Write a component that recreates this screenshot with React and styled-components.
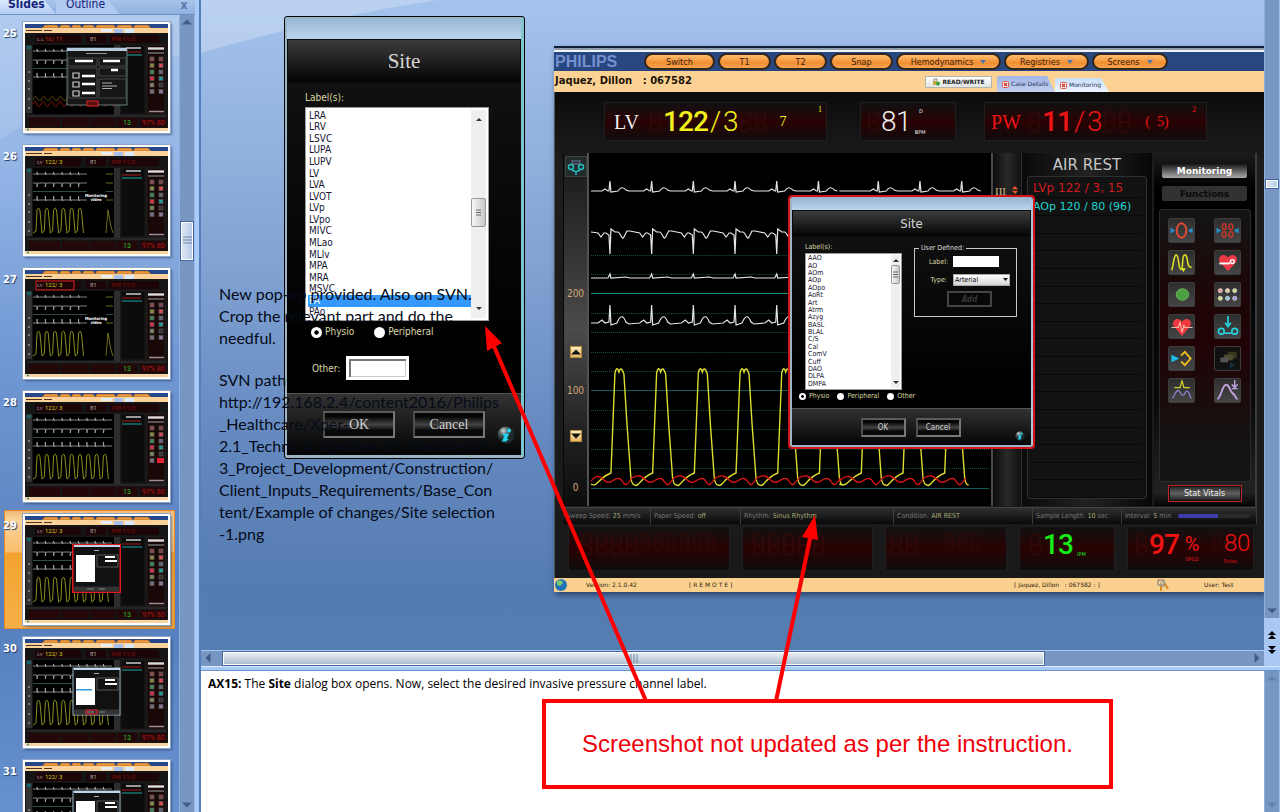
import React from "react";
import styled, { createGlobalStyle, css } from "styled-components";

const UI = `"DejaVu Sans Condensed", "DejaVu Sans", sans-serif`;
const WIDE = `"DejaVu Sans", sans-serif`;
const SERIF = `"Liberation Serif", serif`;
const LED = `Roboto, sans-serif`;

const Global = createGlobalStyle`
  * { box-sizing: border-box; }
  body { margin: 0; overflow: hidden; font-family: ${UI}; }
  button, input, select { font-family: inherit; margin: 0; padding: 0; }
  button { cursor: pointer; }
  ul, ol { list-style: none; margin: 0; padding: 0; }
  h1, h2, p, dl, dd { margin: 0; font-weight: normal; }
`;

/* ---------- application shell ---------- */

const Shell = styled.div`
  position: relative;
  display: flex;
  height: 100vh;
  overflow: hidden;
  background: #5a80b8;
`;

const SlidePane = styled.aside`
  flex: none;
  width: 195px;
  display: flex;
  flex-direction: column;
  position: relative;
  background: linear-gradient(#a9c6ee 0, #94b5e6 20%, #6f97d2 45%, #567fbe 75%, #6690cf 100%);
`;

const PaneTabs = styled.div`
  position: relative;
  display: flex;
  flex: none;
  height: 15px;
  background: linear-gradient(#a9c4ea, #8fb0df);
  border-bottom: 1px solid #6d8fc4;
`;

const PaneTab = styled.button`
  border: 0;
  width: ${(p) => (p.$active ? 56 : 64)}px;
  height: 14px;
  text-align: left;
  padding-left: ${(p) => (p.$active ? 8 : 10)}px;
  padding-bottom: 5px;
  line-height: 9px;
  font-size: 12px;
  font-weight: ${(p) => (p.$active ? "bold" : "normal")};
  color: #15237c;
  background: ${(p) => (p.$active ? "linear-gradient(#dbe9fc,#b4cdf1)" : "#b1c9ee")};
  clip-path: polygon(0 0, calc(100% - 12px) 0, 100% 100%, 0 100%);
`;

const CloseButton = styled.button`
  border: 0;
  background: none;
  margin-left: auto;
  width: 22px;
  height: 14px;
  line-height: 8px;
  padding-bottom: 5px;
  font-size: 12px;
  font-weight: bold;
  color: #5876a8;
`;

const PaneBody = styled.div`
  position: relative;
  display: flex;
  flex: 1;
  min-height: 0;
`;

const ThumbList = styled.ol`
  position: relative;
  flex: 1;
  min-width: 0;
  overflow: hidden;
  padding: 3px 4px 0 4px;
`;

const ThumbRow = styled.li`
  display: flex;
  height: 123px;
  padding: 0 0 4px;
`;

const ThumbButton = styled.button`
  display: flex;
  align-items: flex-start;
  width: 100%;
  height: 119px;
  border: 1px solid ${(p) => (p.$active ? "#e88a2a" : "transparent")};
  background: ${(p) =>
    p.$active ? "linear-gradient(#f0b878 0, #f9d59c 8%, #f8bd6c 35%, #f3a22f 36%, #f6b047 100%)" : "transparent"};
  padding: 3px 0 0;
`;

const ThumbNumber = styled.span`
  width: 20px;
  margin-top: 5px;
  margin-left: -2px;
  text-align: left;
  font: bold 11px ${UI};
  color: #fff;
  text-shadow: 1px 1px 1px #23406e;
`;

const ThumbFrame = styled.span`
  display: block;
  width: 147px;
  height: 111px;
  border: 2px solid #fff;
  outline: 1px solid #8fa6c6;
  box-shadow: 2px 2px 2px rgba(20, 40, 80, 0.5);
  svg { display: block; }
`;

const Divider = styled.div`
  flex: none;
  width: 6px;
  background: #a8cbf8;
  border-right: 2px solid #557fbb;
`;

const ScrollTrack = styled.div`
  flex: none;
  display: flex;
  flex-direction: ${(p) => (p.$row ? "row" : "column")};
  ${(p) => (p.$row ? "height: 16px;" : "width: 16px;")}
  background: #7896c2;
  ${(p) => (p.$row ? "border-top: 1px solid #abc8f2;" : "border-left: 1px solid #8fb0dd; border-right: 1px solid #9bbbe8;")}
`;

const ScrollArrow = styled.button`
  border: 0;
  background: none;
  flex: none;
  width: 14px;
  height: 14px;
  display: grid;
  place-items: center;
`;

const ScrollGap = styled.span`
  flex: ${(p) => p.$grow};
`;

const ScrollThumb = styled.span`
  flex: ${(p) => p.$grow};
  display: grid;
  place-items: center;
  border: 1px solid #46679e;
  box-shadow: inset 0 0 0 1px #fff;
  background: ${(p) => (p.$row ? "linear-gradient(#eef3f8, #a9b9cb)" : "linear-gradient(90deg, #dfe9f6, #b4c9e6)")};
`;

const Arrow = ({ dir, fill = "#3f5c8d" }) => {
  const turn = { up: 0, right: 90, down: 180, left: 270 }[dir];
  return (
    <svg width="10" height="10" viewBox="0 0 10 10" aria-hidden="true">
      <path d="M0 7.5 5 2.5 10 7.5Z" fill={fill} transform={`rotate(${turn} 5 5)`} />
    </svg>
  );
};

const Grip = ({ row }) => (
  <svg width="9" height="9" aria-hidden="true">
    <path d="M0 1H9M0 4H9M0 7H9" stroke="#7385a2" transform={row ? "rotate(90 4.5 4.5)" : undefined} />
  </svg>
);

/* ---------- slide thumbnails ---------- */

const cycle = (n, start, step, fn) => Array.from({ length: n }, (_, i) => fn(start + i * step)).join(" ");

function ThumbArt({ kind }) {
  const low = kind === "setup";
  const wide = kind !== "mask" && kind !== "maskbox";
  const beats = (y, h) => "M8 " + y + cycle(wide ? 9 : 6, 12, 8.3, (x) => `H${x} v${-h} l.6 ${h + 1} l.4 -1`) + `H${wide ? 87 : 62}`;
  return (
    <svg width="143" height="107" viewBox="0 0 143 107" aria-hidden="true">
      <rect width="143" height="107" fill="#151515" />
      <rect width="143" height="4" fill="#26488b" />
      <path d="M17 4 20 1H32L34 4 36 1H44L46 4 48 1H55L57 4 59 1H68L70 4 72 1H89L91 4 93 1H106L108 4 110 1H123L126 4Z" fill="#ef993e" stroke="#8b5a2b" strokeWidth=".5" />
      <rect y="4" width="143" height="5" fill="#fbd39a" />
      <path d="M1 6.5H17M19 6.5H27" stroke="#4a3420" strokeWidth="1.2" />
      <rect x="76" y="5" width="11" height="3" fill="#e8edf3" />
      <rect x="89" y="5" width="9" height="4" fill="#a9c0ee" />
      <rect x="100" y="5" width="9" height="4" fill="#dbe9fb" />
      <rect x="10" y="11" width="46" height="8" fill="#1c0506" />
      <rect x="61" y="11" width="20" height="8" fill="#1c0506" />
      <rect x="84" y="11" width="50" height="8" fill="#1c0506" />
      <text x="12" y="17" fontSize="5" fontFamily="Liberation Serif" fill="#aaa">{low ? "LA" : "LV"}</text>
      <text x="20" y="17" fontSize="6" fontFamily="Roboto" fill={low ? "#bd3517" : "#d4cc20"}>{low ? "16/ 11" : "122/ 3"}</text>
      <text x="65" y="17" fontSize="6" fontFamily="Roboto" fill="#aaa">81</text>
      <text x="87" y="17" fontSize="6" fontFamily="Roboto" fill="#8a1010">PW  11/3</text>
      <rect x="1" y="21" width="6" height="68" fill="#333" />
      <rect x="2" y="22" width="4" height="3" fill="#15646b" />
      <path d="M3 48h2M3 57h2M3 65h2M3 75h2M3 84h2" stroke="#cdbb9a" />
      <rect x="8" y="21" width="81" height="69" fill="#000" />
      <path d={beats(27, 2)} stroke="#bbb" strokeWidth=".7" fill="none" />
      <path d={beats(36, -4)} stroke="#bbb" strokeWidth=".7" fill="none" />
      <path d="M8 44.5H88" stroke="#4a6d6a" strokeWidth=".7" />
      <path d={beats(53, 4)} stroke="#bbb" strokeWidth=".7" fill="none" />
      {low ? (
        <>
          <path d={"M8 76" + cycle(10, 8, 8.3, (x) => `Q${x + 2} 70 ${x + 4} 74T${x + 8.3} 76`)} stroke="#7d5315" strokeWidth=".8" fill="none" />
          <path d={"M8 80" + cycle(10, 8, 8.3, (x) => `Q${x + 2} 75 ${x + 4} 80T${x + 8.3} 80`)} stroke="#a31414" strokeWidth=".8" fill="none" />
        </>
      ) : (
        <path d={"M8 86" + cycle(wide ? 9 : 6, 8, 8.3, (x) => `L${x + 3} 84L${x + 4} 63Q${x + 6} 59 ${x + 7} 64L${x + 9} 86`)} stroke="#9c9c20" strokeWidth=".9" fill="none" />
      )}
      <rect x="89" y="21" width="6" height="70" fill="#2d2d2d" />
      <rect x="96" y="21" width="24" height="69" fill="#0c0c0c" stroke="#292929" strokeWidth=".5" />
      <path d="M101 24H116" stroke="#9a9a9a" strokeWidth="2" />
      <path d="M97 28H116" stroke="#8c1919" strokeWidth="1.2" />
      <path d="M97 31H117" stroke="#1b8e8b" strokeWidth="1.2" />
      <rect x="122" y="21" width="18" height="69" fill="#1a0808" stroke="#333" strokeWidth=".5" />
      <path d="M123 24.5H139" stroke="#ddd" strokeWidth="2.4" />
      <path d="M123 29H139" stroke="#555" strokeWidth="2" />
      {["#8d4d4d", "#7e4449", "#888c3a", "#dd4a55", "#3c8a55", "#667", "#dd3040", "#249a98", "#7b8a57", "#333", "#75707d", "#8c7a99"].map((c, i) => (
        <rect key={i} x={125 + (i % 2) * 9} y={33 + Math.floor(i / 2) * 6.5} width="4" height="4" fill={c} stroke="#555" strokeWidth=".7" />
      ))}
      <path d="M124 87.5H139" stroke="#9b8f95" strokeWidth="1.5" />
      <path d="M2 92H141" stroke="#383838" />
      {[4, 37, 66, 92, 115].map((x, i) => (
        <rect key={x} x={x} y="94" width={[31, 27, 24, 20, 26][i]} height="9" fill="#240708" />
      ))}
      <text x="98" y="101" fontSize="7" fontFamily="Roboto" fill="#25c52b">13</text>
      <text x="117" y="101" fontSize="7" fontFamily="Roboto" fill="#b21616">97% 80</text>
      <rect y="104" width="143" height="3" fill="#f7d3a1" />
      <circle cx="3" cy="105.5" r="1" fill="#348b8a" />
      {!wide && <rect x="62" y="22" width="19" height="66" fill="#000" />}
      {!wide && <path d={"M81 86L83 63L86 80L88 86M81 27H88M81 36H88M81 53H88"} stroke="#9c9c20" strokeWidth=".7" fill="none" />}
      {!wide && (
        <text x="71" y="50" fontSize="4" fontWeight="bold" textAnchor="middle" fontFamily="DejaVu Sans Condensed" fill="#fff">
          <tspan x="71">Monitoring</tspan>
          <tspan x="71" dy="4">video</tspan>
        </text>
      )}
      {kind === "maskbox" && <rect x="11" y="11" width="38" height="9" fill="none" stroke="#e21b1b" />}
      {kind === "plain" && <rect x="132" y="65" width="7" height="5" fill="#eb2034" />}
      {low && (
        <>
          <rect x="42" y="24" width="60" height="57" fill="#161616" stroke="#8aa" strokeWidth=".7" />
          <rect x="42" y="24" width="60" height="3" fill="#b6cbe0" />
          <path d="M61 29.5H82" stroke="#999" />
          <path d="M43 34H72V42H43ZM74 34H101V42H74ZM74 44H101V52H74ZM74 55H101V74H74ZM43 44H72V74H43Z" fill="none" stroke="#666" strokeWidth=".6" />
          <path d="M50 37H68M78 37H95M86 46H93M57 52H70M57 60H70M57 69H70" stroke="#fff" strokeWidth="2.4" />
          <path d="M48 49h6v5h-6zM48 58h6v5h-6zM48 67h6v5h-6z" fill="none" stroke="#ccc" strokeWidth="1.2" />
          <path d="M77 59H87M77 62H92M77 64.5H87" stroke="#aaa" />
          <rect x="62" y="77" width="11" height="5" fill="#511" stroke="#e31f28" />
        </>
      )}
      {(kind === "red" || kind === "dialog") && (
        <>
          <rect x="48" y="29" width="47" height="47" fill="#111" stroke={kind === "red" ? "#e1151c" : "#9fb7c8"} />
          <rect x="49" y="29" width="46" height="2" fill="#c0d5eb" />
          <path d="M69 34.5H74" stroke="#aaa" />
          <rect x="51" y="39" width="19" height="27" fill="#fff" />
          {kind === "dialog" && <rect x="51" y="50" width="16" height="1.5" fill="#2c9adc" />}
          <rect x="72" y="39" width="21" height="12" fill="none" stroke="#888" strokeWidth=".6" />
          <path d="M80 41H90M80 45H92" stroke="#fff" strokeWidth="2" />
          <path d="M49 73H94" stroke="#333" strokeWidth="5" />
          <path d="M62 73H69M74 73H80" stroke="#888" />
          {kind === "dialog" && <rect x="61" y="71" width="11" height="4" fill="none" stroke="#eb2030" />}
          {kind === "red" && <rect x="47.5" y="28.5" width="48" height="48" fill="none" stroke="#e1151c" />}
        </>
      )}
    </svg>
  );
}

const slides = [
  [25, "setup"], [26, "mask"], [27, "maskbox"], [28, "plain"], [29, "red"], [30, "dialog"], [31, "dialog"],
];

/* ---------- slide editor ---------- */

const Editor = styled.main`
  flex: 1;
  min-width: 0;
  display: flex;
  flex-direction: column;
`;

const Stage = styled.section`
  flex: 1;
  min-height: 0;
  display: flex;
`;

const StageColumn = styled.div`
  flex: 1;
  min-width: 0;
  display: flex;
  flex-direction: column;
`;

const Canvas = styled.div`
  position: relative;
  flex: 1;
  overflow: hidden;
  background: linear-gradient(#a3c2ec 0, #98b7e3 15%, #82a3d3 40%, #6489c0 68%, #557cb1 90%, #567db2 100%);
`;

const Sheen = styled.svg`
  position: absolute;
  left: 0;
  top: 0;
  z-index: 0;
`;

const PlacedObject = styled.div`
  position: absolute;
  left: ${(p) => p.$left}px;
  top: ${(p) => p.$top}px;
  ${(p) => (p.$fill ? "right: 0;" : "")}
  ${(p) => (p.$width ? `width: ${p.$width}px;` : "")}
  ${(p) => (p.$height ? `height: ${p.$height}px;` : "")}
`;

const SlideNote = styled.div`
  display: grid;
  gap: 20px;
  white-space: pre;
  font-family: Lato, sans-serif;
  font-size: 16px;
  line-height: 22px;
  color: #050b18;
`;

const PageJump = styled.div`
  flex: none;
  height: 48px;
  background: #a9c8f5;
  display: grid;
  place-content: center;
  gap: 3px;
  margin: 0 -1px;
`;

const JumpButton = styled.button`
  border: 0;
  background: none;
  display: block;
  height: 12px;
  line-height: 0;
`;

const Splitter = styled.div`
  flex: none;
  height: 5px;
  background: #a9cbf8;
  border-top: 1px solid #d8e7fb;
  border-bottom: 1px solid #6c93c8;
`;

const NotesRow = styled.section`
  flex: none;
  height: 141px;
  display: flex;
  background: #fff;
`;

const NotesText = styled.p`
  flex: 1;
  padding: 4px 7px;
  font: 12px/18px "Open Sans", ${UI};
  color: #000;
`;

/* ---------- popup dialog shared parts ---------- */

const Dialog = styled.section`
  display: flex;
  flex-direction: column;
  background: linear-gradient(#141414, #000 75%);
  border: ${(p) => (p.$small ? "2px" : "3px")} solid #9db4c4;
  border-top-width: 1px;
  border-left-width: 2px;
  border-right-color: ${(p) => (p.$small ? "#a9c4d8" : "#7fc4cf")};
  outline: ${(p) => (p.$small ? "2px solid #d3151b" : "1px solid #050505")};
  border-radius: 2px;
  height: 100%;
  font-family: ${UI};
  color: #dcd8a8;
`;

const TitleBar = styled.div`
  flex: none;
  height: ${(p) => (p.$small ? 12 : 21)}px;
  background: linear-gradient(#96b6d4, #bcd5ee);
`;

const DialogHeading = styled.h2`
  flex: none;
  display: grid;
  place-items: center;
  height: ${(p) => (p.$small ? 27 : 44)}px;
  border: 1px solid #0a0a0a;
  background: linear-gradient(#3c3c3c, #040404);
  color: #d6d6d6;
  font: ${(p) => (p.$small ? `13px ${UI}` : `21px ${SERIF}`)};
`;

const DialogContent = styled.div`
  flex: 1;
  min-height: 0;
  padding: ${(p) => (p.$small ? "6px 14px 0 13px" : "8px 32px 0 18px")};
`;

const DialogColumns = styled.div`
  display: grid;
  grid-template-columns: 97px 103px;
  justify-content: space-between;
  align-items: start;
`;

const FieldTitle = styled.p`
  font-size: ${(p) => (p.$small ? 7 : 10)}px;
  line-height: ${(p) => (p.$small ? 9 : 14)}px;
`;

const ListFrame = styled.div`
  display: flex;
  height: ${(p) => (p.$small ? 137 : 214)}px;
  margin-top: ${(p) => (p.$small ? 1 : 2)}px;
  padding: ${(p) => (p.$small ? 1 : 2)}px;
  background: #fff;
  border: 1px solid #9b9b9b;
`;

const ListItems = styled.ul`
  flex: 1;
  display: flex;
  flex-direction: column;
  min-height: 0;
`;

const ListItem = styled.li`
  flex: 1;
  display: flex;
  align-items: center;
  min-height: 0;
  padding-left: 1px;
  font-size: ${(p) => (p.$small ? 7 : 10)}px;
  line-height: 1;
  color: ${(p) => (p.$selected ? "#fff" : "#161630")};
  background: ${(p) => (p.$selected ? "#3399ff" : "transparent")};
`;

const ListScroll = styled.div`
  flex: none;
  width: ${(p) => (p.$small ? 9 : 15)}px;
  display: flex;
  flex-direction: column;
  align-items: center;
  padding: ${(p) => (p.$small ? "2px 0" : "6px 0")};
  background: #efefef;
  svg { flex: none; }
`;

const ListThumb = styled.span`
  flex: none;
  width: 100%;
  height: ${(p) => (p.$small ? 19 : 29)}px;
  margin-top: ${(p) => (p.$small ? 2 : 76)}px;
  margin-bottom: auto;
  display: grid;
  place-items: center;
  border: 1px solid #999;
  border-radius: 2px;
  background: linear-gradient(90deg, #f8f8f8, #c7c7c7);
`;

const RadioRow = styled.div`
  display: flex;
  gap: ${(p) => (p.$small ? 8 : 20)}px;
  margin: ${(p) => (p.$small ? "2px 0 0 -6px" : "4px 0 0 6px")};
`;

const RadioLabel = styled.label`
  display: flex;
  align-items: center;
  gap: 3px;
  font-size: ${(p) => (p.$small ? 7 : 10)}px;
  line-height: ${(p) => (p.$small ? 8 : 14)}px;
`;

const Radio = styled.input`
  appearance: none;
  width: ${(p) => (p.$small ? 7 : 11)}px;
  height: ${(p) => (p.$small ? 7 : 11)}px;
  border-radius: 50%;
  background: #fff;
  &:checked { background: radial-gradient(#000 0 24%, #fff 32%); }
`;

const OtherRow = styled.label`
  display: flex;
  align-items: center;
  gap: 6px;
  margin: 17px 0 0 7px;
  font-size: 10px;
`;

const OtherInput = styled.input`
  width: 63px;
  height: 24px;
  border: 3px solid #fff;
  background: #fff;
  box-shadow: inset 1px 1px 0 1px #777, inset -1px -1px 0 #ccc;
`;

const UserDefined = styled.fieldset`
  margin: 0;
  padding: 2px 6px 0 14px;
  height: 74px;
  border: 1px solid #c9c9c9;
  display: flex;
  flex-direction: column;
  gap: 5px;
  min-width: 0;
  legend { padding: 0 2px; margin-left: -10px; font-size: 7px; line-height: 10px; color: #ddd; }
`;

const FieldLine = styled.div`
  display: grid;
  grid-template-columns: 18px 1fr;
  gap: 6px;
  align-items: center;
  height: 13px;
  font-size: 7px;
  label { text-align: right; }
`;

const SmallInput = styled.input`
  width: 46px;
  height: 11px;
  border: 0;
  background: #fff;
`;

const SmallSelect = styled.select`
  width: 100%;
  height: 12px;
  border: 1px solid #aaa;
  border-radius: 0;
  background: linear-gradient(#fff, #d5d5d5);
  font-size: 7px;
  appearance: none;
  padding-left: 1px;
`;

const SelectWrap = styled.span`
  position: relative;
  display: block;
  height: 12px;
  svg { position: absolute; right: 2px; top: 4px; pointer-events: none; }
`;

const MetalButton = styled.button`
  width: ${(p) => (p.$small ? 45 : 72)}px;
  height: ${(p) => (p.$small ? 19 : 27)}px;
  border: 2px solid;
  border-color: #5b5b5b #777 #777 #4d4d4d;
  background: linear-gradient(#050505 0 15%, #444 50%, #090909 75%);
  color: #cfcfcf;
  font: ${(p) => (p.$small ? `8px ${UI}` : `14px ${SERIF}`)};
  ${(p) =>
    p.$disabledLook &&
    css`
      align-self: center;
      height: 16px;
      color: #353535;
      background: #080808;
      border-color: #444;
      font-style: italic;
      font-weight: bold;
    `}
`;

const DialogFooter = styled.div`
  position: relative;
  flex: none;
  display: flex;
  align-items: center;
  justify-content: center;
  gap: ${(p) => (p.$small ? 10 : 18)}px;
  height: ${(p) => (p.$small ? 37 : 62)}px;
  padding-right: ${(p) => (p.$small ? 2 : 0)}px;
  border-top: 1px solid #555;
  background: linear-gradient(#323232, #040404);
`;

const InfoBadge = styled.span`
  position: absolute;
  right: ${(p) => (p.$small ? 6 : 6)}px;
  bottom: ${(p) => (p.$small ? 4 : 11)}px;
  line-height: 0;
`;

const InfoIcon = ({ size }) => (
  <svg width={size} height={size} viewBox="0 0 18 18" aria-hidden="true">
    <defs>
      <radialGradient id={`orb${size}`} cx=".35" cy=".25">
        <stop offset="0" stopColor="#d3dadb" /><stop offset=".5" stopColor="#566266" /><stop offset="1" stopColor="#1c2a2e" />
      </radialGradient>
    </defs>
    <circle cx="9" cy="9" r="8.5" fill={`url(#orb${size})`} />
    <circle cx="12" cy="4.500" r="2" fill="#20d6ee" />
    <path d="M6 7.5H12L10 13H12L9 15.500H5L7.500 9.500H6Z" fill="#20d6ee" />
  </svg>
);

function LabelList({ items, selected, small }) {
  return (
    <ListFrame $small={small}>
      <ListItems role="listbox" aria-label="Label(s)">
        {items.map((t) => (
          <ListItem key={t} role="option" aria-selected={t === selected} $selected={t === selected} $small={small}>{t}</ListItem>
        ))}
      </ListItems>
      <ListScroll $small={small}>
        <svg width="6" height="6" viewBox="0 0 6 6" aria-hidden="true"><path d="M0 5 3 2 6 5Z" fill="#333" /></svg>
        <ListThumb $small={small}>
          <svg width="5" height="7" aria-hidden="true"><path d="M0 1H5M0 3.5H5M0 6H5" stroke="#666" /></svg>
        </ListThumb>
        <svg width="6" height="6" viewBox="0 0 6 6" aria-hidden="true"><path d="M0 1 3 4 6 1Z" fill="#333" /></svg>
      </ListScroll>
    </ListFrame>
  );
}

const bigLabels = ["LRA", "LRV", "LSVC", "LUPA", "LUPV", "LV", "LVA", "LVOT", "LVp", "LVpo", "MIVC", "MLao", "MLlv", "MPA", "MRA", "MSVC", "PA", "PAo"];
const smallLabels = ["AAO", "AO", "AOm", "AOp", "AOpo", "AoRt", "Art", "Atrm", "Azyg", "BASL", "BLAL", "C/S", "Cal", "ComV", "Cuff", "DAO", "DLPA", "DMPA"];

function RadioOption({ name, text, checked, small }) {
  return (
    <RadioLabel $small={small}>
      <Radio type="radio" name={name} defaultChecked={checked} $small={small} />
      {text}
    </RadioLabel>
  );
}

function LargeSiteDialog() {
  return (
    <Dialog>
      <TitleBar />
      <DialogHeading>Site</DialogHeading>
      <DialogContent>
        <FieldTitle>Label(s):</FieldTitle>
        <LabelList items={bigLabels} selected="PA" />
        <RadioRow>
          <RadioOption name="site" text="Physio" checked />
          <RadioOption name="site" text="Peripheral" />
        </RadioRow>
        <OtherRow>Other:<OtherInput type="text" /></OtherRow>
      </DialogContent>
      <DialogFooter>
        <MetalButton>OK</MetalButton>
        <MetalButton>Cancel</MetalButton>
        <InfoBadge><InfoIcon size={18} /></InfoBadge>
      </DialogFooter>
    </Dialog>
  );
}

function SmallSiteDialog() {
  return (
    <Dialog $small>
      <TitleBar $small />
      <DialogHeading $small>Site</DialogHeading>
      <DialogContent $small>
        <DialogColumns>
          <div>
            <FieldTitle $small>Label(s):</FieldTitle>
            <LabelList items={smallLabels} small />
          </div>
          <UserDefined>
            <legend>User Defined:</legend>
            <FieldLine>
              <label htmlFor="ud-label">Label:</label>
              <SmallInput id="ud-label" type="text" />
            </FieldLine>
            <FieldLine>
              <label htmlFor="ud-type">Type:</label>
              <SelectWrap>
                <SmallSelect id="ud-type" defaultValue="Arterial"><option>Arterial</option></SmallSelect>
                <svg width="5" height="4" aria-hidden="true"><path d="M0 0H5L2.5 3Z" fill="#111" /></svg>
              </SelectWrap>
            </FieldLine>
            <MetalButton $small $disabledLook>Add</MetalButton>
          </UserDefined>
        </DialogColumns>
        <RadioRow $small>
          <RadioOption small name="site2" text="Physio" checked />
          <RadioOption small name="site2" text="Peripheral" />
          <RadioOption small name="site2" text="Other" />
        </RadioRow>
      </DialogContent>
      <DialogFooter $small>
        <MetalButton $small>OK</MetalButton>
        <MetalButton $small>Cancel</MetalButton>
        <InfoBadge $small><InfoIcon size={10} /></InfoBadge>
      </DialogFooter>
    </Dialog>
  );
}

/* ---------- monitoring application ---------- */

const Monitor = styled.article`
  display: flex;
  flex-direction: column;
  height: 546px;
  background: #151515;
  box-shadow: 2px 3px 6px rgba(10, 25, 60, 0.6);
`;

const TopEdge = styled.div`
  flex: none;
  height: 6px;
  background: linear-gradient(#10203a 0 40%, #8e9ba8 40% 60%, #eef3f8 60%);
`;

const NavBar = styled.nav`
  flex: none;
  display: flex;
  gap: 3px;
  align-items: center;
  height: 19px;
  background: #28467f;
`;

const Brand = styled.h1`
  width: 87px;
  padding-left: 1px;
  font: bold 16px/19px "Liberation Sans", sans-serif;
  color: #7391d0;
`;

const NavPill = styled.button`
  display: flex;
  align-items: center;
  justify-content: center;
  gap: 7px;
  width: ${(p) => p.$width}px;
  height: 17px;
  border: 2px solid #33251b;
  border-radius: 9px;
  background: linear-gradient(#ffbf70, #f38e33 60%, #f9a64f);
  font: 9px/10px ${UI};
  color: #3a200d;
`;

const PatientBar = styled.div`
  flex: none;
  display: flex;
  align-items: flex-end;
  height: 21px;
  background: #fbd293;
`;

const PatientName = styled.p`
  flex: 1;
  padding-left: 1px;
  white-space: pre;
  font: bold 10px/22px ${WIDE};
  color: #1d1408;
`;

const ModeButton = styled.button`
  display: flex;
  align-items: center;
  justify-content: center;
  gap: 2px;
  width: 67px;
  height: 12px;
  margin: 0 5px 4px 0;
  border: 1px solid #b5b5a8;
  background: linear-gradient(#fff, #dfe3e4);
  font: bold 6px/8px ${WIDE};
  color: #222;
`;

const CaseTab = styled.button`
  display: flex;
  align-items: center;
  gap: 2px;
  width: ${(p) => (p.$last ? 54 : 58)}px;
  height: ${(p) => (p.$last ? 14 : 16)}px;
  margin-right: ${(p) => (p.$last ? 155 : 0)}px;
  padding-left: 5px;
  border: 0;
  border-radius: 2px 0 0 0;
  clip-path: polygon(0 0, calc(100% - 8px) 0, 100% 100%, 0 100%);
  background: ${(p) => (p.$last ? "linear-gradient(#c9dffb,#eef5fe)" : "linear-gradient(#9fb6e6,#c2cfee)")};
  font: ${(p) => (p.$last ? 6 : 6)}px/8px ${WIDE};
  color: #26325c;
`;

const TabCross = () => (
  <svg width="7" height="7" viewBox="0 0 7 7" aria-hidden="true">
    <rect x=".5" y=".5" width="6" height="6" rx="1" fill="#fff" stroke="#d65a4b" />
    <path d="M2 2 5 5M5 2 2 5" stroke="#d33322" strokeWidth="1.4" />
  </svg>
);

const MonitorBody = styled.div`
  flex: 1;
  min-height: 0;
  display: flex;
  flex-direction: column;
  padding: 10px 7px 6px 8px;
  border-left: 1px solid #4d5357;
  background: linear-gradient(#0b0b0b, #1d1d1d 15%, #191919);
`;

const ReadoutRow = styled.div`
  display: flex;
  flex: none;
  justify-content: ${(p) => (p.$bottom ? "space-between" : "flex-start")};
  padding: ${(p) => (p.$bottom ? "0 3px 0 5px" : "0 0 0 41px")};
`;

const Readout = styled.div`
  display: flex;
  align-items: center;
  flex: none;
  position: relative;
  width: ${(p) => p.$width}px;
  height: ${(p) => (p.$bottom ? 45 : 39)}px;
  margin-right: ${(p) => p.$after || 0}px;
  padding-left: ${(p) => p.$pad || 0}px;
  padding-bottom: ${(p) => (p.$bottom ? 8 : 0)}px;
  border: 1px solid #1f1f1f;
  background: linear-gradient(#111, #2a0203 50%, #0f0c0c);
  color: ${(p) => p.$color};
`;

const Channel = styled.span`
  width: ${(p) => p.$width}px;
  font: 20px/24px ${SERIF};
  color: ${(p) => (p.$white ? "#eee" : "inherit")};
`;

const Cell = styled.span`
  position: relative;
  display: grid;
  place-items: center;
  width: ${(p) => (p.$size === "s" ? 13 : 15)}px;
  height: ${(p) => (p.$size === "s" ? 20 : 24)}px;
  margin-bottom: ${(p) => (p.$size === "s" ? 6 : 0)}px;
  font: ${(p) => (p.$bold ? 500 : 300)} ${(p) => (p.$size === "s" ? 24 : 28)}px/24px ${LED};
  svg { position: absolute; inset: 1px; }
  b { position: relative; font-weight: inherit; }
`;

const Caption = styled.small`
  align-self: ${(p) => p.$at || "center"};
  margin: ${(p) => p.$margin || "0"};
  font: ${(p) => p.$size || 5}px/8px ${(p) => (p.$serif ? SERIF : WIDE)};
`;

const UnitStack = styled.span`
  display: flex;
  flex-direction: column;
  align-items: center;
  width: ${(p) => p.$width}px;
  margin: 6px 0 0 ${(p) => p.$before || 0}px;
`;

const Percent = styled.span`
  font: 20px/22px ${LED};
`;

const DigitGroup = styled.span`
  display: flex;
`;

const Value = styled.span`
  width: ${(p) => p.$width}px;
  text-align: center;
  white-space: pre;
  font: 14px/24px ${SERIF};
`;

function Digits({ value, size, bold }) {
  const w = size === "s" ? 11 : 13;
  const h = size === "s" ? 18 : 22;
  return value.split("").map((c, i) => (
    <Cell key={i} $size={size} $bold={bold}>
      {c === "_" && (
        <svg width={w} height={h} viewBox="0 0 13 22" preserveAspectRatio="none" aria-hidden="true">
          <path d="M2 1.5H11V20.5H2ZM2 11H11" fill="none" stroke="#3a0b0b" strokeWidth="2" opacity=".55" strokeDasharray="8 1.5" />
        </svg>
      )}
      {c !== "_" && <b>{c}</b>}
    </Cell>
  ));
}

const MainGrid = styled.div`
  flex: none;
  display: grid;
  grid-template-columns: 26px 1fr 31px 130px 2px 103px;
  height: 353px;
  margin: 12px 0 1px;
`;

const ScaleStrip = styled.div`
  position: relative;
  display: flex;
  flex-direction: column;
  align-items: center;
  border-left: 1px solid #070707;
  border-right: 2px solid #525252;
  background: linear-gradient(#181818, #2b2b2b 20%, #4b4b4b 50%, #202020 80%, #0c0c0c);
  font: 10px/12px ${UI};
  color: #d1a77a;
  padding: 3px 0 12px;
`;

const StripButton = styled.button`
  display: grid;
  place-items: center;
  width: ${(p) => (p.$tool ? 22 : 12)}px;
  height: ${(p) => (p.$tool ? 21 : 12)}px;
  border: 1px solid ${(p) => (p.$tool ? "#3b4042" : "#b98b3a")};
  background: ${(p) => (p.$tool ? "#252b2c" : "linear-gradient(#fff0bc,#e3b566)")};
`;

const ScaleSpace = styled.span`
  flex: ${(p) => p.$grow};
`;

const WaveArea = styled.div`
  background: #000;
  min-width: 0;
  svg { display: block; width: 100%; height: 100%; }
`;

const SideStrip = styled.div`
  border-left: 2px solid #4b4b4b;
  border-right: 1px solid #303030;
  background: linear-gradient(90deg, #0c0c0c, #292929 50%, #111);
  display: flex;
  gap: 5px;
  justify-content: center;
  padding-top: 32px;
  font: 11px/12px ${SERIF};
  color: #d6b486;
`;

const RestPanel = styled.div`
  display: flex;
  flex-direction: column;
  padding: 2px 5px 7px;
  background: linear-gradient(90deg, #0a0a0a, #222 50%, #070707);
`;

const RestTitle = styled.h2`
  text-align: center;
  font: 15px/21px ${WIDE};
  color: #c6c6c6;
`;

const Measures = styled.ul`
  flex: 1;
  display: flex;
  flex-direction: column;
  border: 1px solid #303030;
  border-radius: 3px;
  background: #121212;
  padding: 3px 3px 0;
`;

const Measure = styled.li`
  flex: 1;
  border-bottom: 1px solid #080808;
  padding-left: 2px;
  white-space: nowrap;
  font: ${(p) => (p.$size || 11)}px/17px ${WIDE};
  color: ${(p) => p.$color};
`;

const FunctionPanel = styled.div`
  display: flex;
  flex-direction: column;
  align-items: center;
  padding: 10px 4px 4px;
  border-right: 2px solid #3c3c3c;
  background: linear-gradient(#1c1c1c, #000 10%, #090909 70%, #222 96%, #050505);
`;

const PanelTab = styled.button`
  flex: none;
  width: 85px;
  height: 15px;
  margin-bottom: 8px;
  border: 0;
  border-radius: 2px;
  font: bold 9px/12px ${WIDE};
  color: ${(p) => (p.$active ? "#fff" : "#090909")};
  background: ${(p) => (p.$active ? "linear-gradient(#0d0d0d, #858585 75%, #aaa)" : "#323232")};
`;

const IconGrid = styled.div`
  flex: 1;
  width: 92px;
  display: grid;
  grid-template-columns: 27px 27px;
  grid-auto-rows: 25px;
  justify-content: center;
  gap: 7px 19px;
  padding-top: 8px;
  border: 1px solid #2b2b2b;
  border-radius: 3px;
  background: linear-gradient(#141414, #1e0506 35%, #210306 50%, #151212 85%);
`;

const ToolButton = styled.button`
  display: grid;
  place-items: center;
  border: 1px solid #3d3d3d;
  border-radius: 2px;
  background: ${(p) => (p.$dim ? "#111" : "linear-gradient(#2e2e2e, #454545)")};
`;

const StatButton = styled.button`
  flex: none;
  width: 74px;
  height: 17px;
  margin-top: 3px;
  border: 1px solid #c3242c;
  background: linear-gradient(#222, #606060 50%, #1b1b1b);
  box-shadow: inset 0 0 0 1px #111;
  font: 9px/11px ${UI};
  color: #eee;
`;

const StatusBar = styled.dl`
  flex: none;
  display: grid;
  grid-template-columns: 88px 90px 153px 139px 89px 1fr;
  height: 17px;
  margin-bottom: 2px;
  border-top: 1px solid #444;
  background: linear-gradient(#303030, #080808);
`;

const StatusItem = styled.div`
  display: flex;
  align-items: center;
  gap: 2px;
  padding-left: 3px;
  border-right: 1px solid #3b3b3b;
  white-space: nowrap;
  font: 7px/10px ${UI};
  color: #777;
  dd { color: #a7a774; }
`;

const Progress = styled.span`
  flex: 1;
  height: 4px;
  margin: 0 6px 0 5px;
  border-radius: 2px;
  background: linear-gradient(90deg, #3d3dae 55%, #2a2a2a 55%);
`;

const FooterBar = styled.footer`
  flex: none;
  display: grid;
  grid-template-columns: 32px 103px 1fr 142px 48px 60px;
  align-items: center;
  height: 14px;
  background: #fad08f;
  font: 6px/8px ${WIDE};
  color: #2e210e;
  white-space: pre;
  svg { display: block; }
`;

const tri = (d, fill = "#278fc7") => <path d={d} fill={fill} />;
const toolArt = {
  Zero: <>{tri("M0 9 5 12 0 15Z")}{tri("M23 9 18 12 23 15Z")}<ellipse cx="11.5" cy="12" rx="5" ry="7.5" fill="none" stroke="#e14834" strokeWidth="2" /></>,
  "Zero all": (
    <>
      {tri("M0 9 5 12 0 15Z")}{tri("M23 9 18 12 23 15Z")}
      {[[8, 8], [15, 8], [8, 16], [15, 16]].map(([x, y]) => <ellipse key={`${x}${y}`} cx={x} cy={y} rx="2" ry="3" fill="none" stroke="#c5352b" strokeWidth="1.5" />)}
    </>
  ),
  Pressure: <><path d="M1 20C3 18 3 4 6 4S8 19 11 19 11 4 15 4 16 18 22 17" fill="none" stroke="#dcdc24" strokeWidth="1.7" /><path d="M11 18h5l-2.5 4z" fill="#ecec28" /></>,
  "Cardiac output": <><path d="M12 21 3 11C1 4 9 2 12 7 15 2 23 4 21 11Z" fill="#ee3945" /><path d="M3 13H14" stroke="#fff" strokeWidth="2" /><circle cx="16.5" cy="11" r="2" fill="none" stroke="#fff" strokeWidth="1.5" /></>,
  Record: <ellipse cx="12.5" cy="12" rx="6.5" ry="6" fill="#4b9f43" stroke="#6ab658" />,
  Events: <>{["#e79c9c", "#e6c99b", "#c9d38c", "#d8d98e", "#8ec4de", "#a893d8"].map((c, i) => <circle key={i} cx={4 + (i % 3) * 7.5} cy={8 + Math.floor(i / 3) * 8} r="2.2" fill={c} stroke="#eee" strokeWidth=".6" />)}</>,
  Heart: <><path d="M12 22 3 11C1 4 9 2 12 7 15 2 23 4 21 11Z" fill="#f03a3f" /><path d="M1 13H8L10 8 12 18 14 11 15 13H23" fill="none" stroke="#ffb9a9" strokeWidth="1.2" /></>,
  Valve: <><path d="M12 1V10M9 8 12 12 15 8" fill="none" stroke="#25d3df" strokeWidth="1.8" /><circle cx="5" cy="17" r="3" fill="none" stroke="#25d3df" strokeWidth="1.7" /><circle cx="19" cy="17" r="3" fill="none" stroke="#25d3df" strokeWidth="1.7" /><path d="M8 19H16" stroke="#25d3df" strokeWidth="1.7" /></>,
  Next: <>{tri("M1 8 9 12 1 16Z", "#1ebdeb")}<path d="M11 9 15 5 21 12 15 19 11 15" fill="none" stroke="#edbf1e" strokeWidth="2" /></>,
  Copy: <><path d="M12 5h9v7h-9z" fill="#3b391c" /><path d="M8 8h9v6H8z" fill="#4e4c34" /><path d="M4 11h8v5H4z" fill="#555" />{tri("M14 16 20 19 14 22Z", "#16303d")}</>,
  "ECG sync": <><path d="M4 9H10L12 2 14 9H20" fill="none" stroke="#d3d32b" strokeWidth="1.3" /><path d="M2 20C5 17 5 12 8 12S10 17 13 17 15 11 18 13 19 19 22 20" fill="none" stroke="#8d83c4" strokeWidth="1.4" /></>,
  Freeze: <><path d="M1 21C5 19 6 6 10 6S13 12 17 15 19 20 22 21" fill="none" stroke="#c0a3e2" strokeWidth="2" /><path d="M19 1V8M16 5.5 19 9 22 5.5M16 10H22" fill="none" stroke="#c0a3e2" strokeWidth="1.4" /></>,
};

/* Beat-by-beat traces; each sweep restarts after the gap. */
const PERIOD = 41.8;
const sweep = (x0, x1, first, start, beat) => {
  let d = `M${x0} ${start}`;
  for (let x = first; x < x1 - 4; x += PERIOD) d += beat(x);
  return d;
};
const both = (start, beat, offA = 21, offB = 39) =>
  sweep(2, 248, offA, start, beat) + sweep(251, 400, 251 + offB, start, beat);

function Waves() {
  const ecg = both(38, (x) => `L${x - 8} 38L${x - 5} 36L${x - 2} 38L${x - 1} 38L${x} 28L${x + 1} 39L${x + 8} 38Q${x + 12} 32 ${x + 16} 37L${x + 19} 38`);
  const inv = both(79, (x) => `L${x - 12} 80L${x - 9} 84L${x - 6} 80L${x - 4} 80L${x - 1} 82L${x} 101L${x + 1} 76L${x + 5} 79L${x + 8} 79C${x + 11} 80 ${x + 12} 88 ${x + 14} 84L${x + 17} 78L${x + 20} 78`);
  const flat = both(125, (x) => `L${x - 2} 125L${x} 121L${x + 1} 125L${x + 16} 124L${x + 20} 125`);
  const low = both(170, (x) => `L${x - 12} 170L${x - 8} 167L${x - 5} 170L${x - 1} 169L${x} 152L${x + 1} 172L${x + 7} 170Q${x + 12} 158 ${x + 16} 169L${x + 19} 171`);
  const pressure = both(331, (x) => `C${x - 14} 335 ${x - 13} 325 ${x} 320L${x + 2} 270L${x + 4} 220Q${x + 6} 212 ${x + 8} 219Q${x + 10} 212 ${x + 13} 221L${x + 16} 270L${x + 20} 325Q${x + 21} 332 ${x + 24} 332`, 22, 22);
  const wedge = both(328, (x) => `C${x - 14} 321 ${x - 11} 323 ${x - 7} 327S${x} 329 ${x + 3} 327 ${x + 9} 324 ${x + 12} 329 ${x + 17} 331 ${x + 21} 325`, 22, 22);
  return (
    <svg viewBox="0 0 403 353" preserveAspectRatio="none" role="img" aria-label="Hemodynamic waveforms" fill="none">
      {[160, 179, 199, 218, 257, 276, 296, 315, 121, 102].map((y) => <path key={y} d={`M2 ${y}.5H401`} stroke="#144f4c" strokeDasharray="1 1" />)}
      <path d="M2 140.5H401" stroke="#14877a" /><path d="M2 237.5H401M2 335.5H401" stroke="#145c57" />
      {[ecg, inv, flat, low].map((d, i) => <path key={i} d={d} stroke="#e6e6e6" strokeWidth="1.2" />)}
      <path d={pressure} stroke="#dddd31" strokeWidth="1.4" />
      <path d={wedge} stroke="#df1414" strokeWidth="1.3" />
    </svg>
  );
}

const pills = [["Switch", 71], ["T1", 53], ["T2", 53], ["Snap", 63], ["Hemodynamics", 105, 1], ["Registries", 85, 1], ["Screens", 76, 1]];

function MonitorApp() {
  return (
    <Monitor>
      <TopEdge />
      <NavBar>
        <Brand>PHILIPS</Brand>
        {pills.map(([t, w, menu]) => (
          <NavPill key={t} $width={w}>
            {t}
            {menu && <svg width="6" height="4" aria-hidden="true"><path d="M0 0H6L3 4Z" fill="#4d77ad" /></svg>}
          </NavPill>
        ))}
      </NavBar>
      <PatientBar>
        <PatientName>{"Jaquez, Dillon   : 067582"}</PatientName>
        <ModeButton>
          <svg width="8" height="8" aria-hidden="true"><rect x="1" y="3" width="4" height="4" fill="#c9a844" /><path d="M2 3V1H5V3" fill="none" stroke="#888" /><circle cx="6" cy="5.5" r="2" fill="#35a13c" /></svg>
          READ/WRITE
        </ModeButton>
        <CaseTab><TabCross />Case Details</CaseTab>
        <CaseTab $last><TabCross />Monitoring</CaseTab>
      </PatientBar>
      <MonitorBody>
        <ReadoutRow>
          <Readout $width={223} $after={33} $pad={9} $color="#f3ef1d">
            <Channel $width={34} $white>LV</Channel>
            <Digits value="_122" bold /><Digits value="/3__" />
            <Value $width={30}>7</Value>
            <Caption $serif $size={8} $at="flex-start" $margin="3px 0 0 20px">1</Caption>
          </Readout>
          <Readout $width={96} $after={28} $pad={5} $color="#eee">
            <Digits value="_81" />
            <Caption $at="flex-start" $size={5} $margin="4px -8px 0 8px">D</Caption>
            <Caption $at="flex-end" $size={5} $margin="0 0 4px 0">BPM</Caption>
          </Readout>
          <Readout $width={223} $pad={6} $color="#ec1414">
            <Channel $width={36}>PW</Channel>
            <Digits value="_11" bold /><Digits value="/3__" />
            <Value $width={50}>{"(  5)"}</Value>
            <Caption $serif $size={8} $at="flex-start" $margin="3px 0 0 10px">2</Caption>
          </Readout>
        </ReadoutRow>
        <MainGrid>
          <ScaleStrip>
            <StripButton $tool aria-label="Connection">
              <svg width="18" height="18" fill="none" stroke="#24bfc2" strokeWidth="1.5" aria-hidden="true"><path d="M5 3H13V6H5Z" stroke="#567" /><circle cx="4" cy="9" r="2.5" /><circle cx="14" cy="9" r="2.5" /><path d="M5 12 9 14 13 12M9 14V17" /></svg>
            </StripButton>
            <ScaleSpace $grow={109} />200
            <ScaleSpace $grow={46} />
            <StripButton aria-label="Increase scale"><Arrow dir="up" fill="#111" /></StripButton>
            <ScaleSpace $grow={26} />100
            <ScaleSpace $grow={33} />
            <StripButton aria-label="Decrease scale"><Arrow dir="down" fill="#111" /></StripButton>
            <ScaleSpace $grow={39} />0
          </ScaleStrip>
          <WaveArea><Waves /></WaveArea>
          <SideStrip>
            III
            <svg width="8" height="10" viewBox="0 0 10 10" aria-hidden="true"><path d="M1 4 5 0 9 4ZM1 6 5 10 9 6Z" fill="#e85524" /></svg>
          </SideStrip>
          <RestPanel>
            <RestTitle>AIR REST</RestTitle>
            <Measures>
              <Measure $color="#d31a20" $size={12}>LVp 122 / 3, 15</Measure>
              <Measure $color="#1fd5d3">AOp 120 / 80 (96)</Measure>
              {Array.from({ length: 16 }, (_, i) => <Measure key={i} />)}
            </Measures>
          </RestPanel>
          <span />
          <FunctionPanel>
            <PanelTab $active>Monitoring</PanelTab>
            <PanelTab>Functions</PanelTab>
            <IconGrid>
              {Object.entries(toolArt).map(([name, art]) => (
                <ToolButton key={name} aria-label={name} $dim={name === "Copy"}>
                  <svg width="24" height="23" viewBox="0 0 24 24" aria-hidden="true">{art}</svg>
                </ToolButton>
              ))}
            </IconGrid>
            <StatButton>Stat Vitals</StatButton>
          </FunctionPanel>
        </MainGrid>
        <StatusBar>
          <StatusItem><dt>Sweep Speed:</dt><dd>25</dd>mm/s</StatusItem>
          <StatusItem><dt>Paper Speed:</dt><dd>off</dd></StatusItem>
          <StatusItem><dt>Rhythm:</dt><dd>Sinus Rhythm</dd></StatusItem>
          <StatusItem><dt>Condition:</dt><dd>AIR REST</dd></StatusItem>
          <StatusItem><dt>Sample Length:</dt><dd>10</dd>sec</StatusItem>
          <StatusItem><dt>Interval:</dt><dd>5</dd>min<Progress /></StatusItem>
        </StatusBar>
        <ReadoutRow $bottom>
          <Readout $bottom $width={162} $pad={10}><Digits value="____" /><Digits value="______" size="s" /></Readout>
          <Readout $bottom $width={131} $pad={8}><Digits value="_____" /></Readout>
          <Readout $bottom $width={122} $pad={3}><Digits value="__" /><Caption $margin="0 0 0 24px" /><Digits value="___" size="s" /></Readout>
          <Readout $bottom $width={96} $pad={8} $color="#16ec1a">
            <Digits value="_13" bold />
            <Caption $at="flex-end" $margin="0 0 4px 4px">IPM</Caption>
          </Readout>
          <Readout $bottom $width={127} $pad={6} $color="#f01313">
            <Digits value="_97" bold />
            <UnitStack $width={20} $before={3}><Percent>%</Percent><Caption>SPO2</Caption></UnitStack>
            <UnitStack $width={39} $before={9}><DigitGroup><Digits value="_80" size="s" /></DigitGroup><Caption>Pulse</Caption></UnitStack>
          </Readout>
        </ReadoutRow>
      </MonitorBody>
      <FooterBar>
        <svg width="14" height="14" aria-hidden="true"><circle cx="7" cy="7" r="6" fill="#2273b9" /><path d="M3 3Q8 1 9 5L6 8 3 7Z" fill="#79c86c" /></svg>
        <span>Version: 2.1.0.42</span>
        <span>[ R E M O T E ]</span>
        <span>{"[ Jaquez, Dillon   : 067582 : ]"}</span>
        <svg width="14" height="12" fill="none" aria-hidden="true"><path d="M2 1H8V6H2Z" stroke="#777" /><circle cx="7" cy="5" r="2.5" stroke="#999" /><path d="M9 5 12 10M5 7V12" stroke="#d98f24" strokeWidth="2" /></svg>
        <span>User: Test</span>
      </FooterBar>
    </Monitor>
  );
}

/* ---------- review mark-up ---------- */

const ReviewNote = styled.div`
  position: absolute;
  left: 542px;
  top: 699px;
  display: grid;
  place-items: center;
  width: 571px;
  height: 90px;
  border: 4px solid #f00;
  background: #fff;
  font: 24px/28px "Liberation Sans", sans-serif;
  color: #f0000a;
`;

const ReviewArrows = styled.svg`
  position: absolute;
  left: 0;
  top: 0;
  width: 100%;
  height: 100%;
  pointer-events: none;
`;

export default function App() {
  return (
    <Shell>
      <Global />
      <SlidePane>
        <PaneTabs>
          <PaneTab $active>Slides</PaneTab>
          <PaneTab>Outline</PaneTab>
          <CloseButton aria-label="Close pane">x</CloseButton>
        </PaneTabs>
        <PaneBody>
          <Sheen width="179" height="200" aria-hidden="true"><path d="M0 0H179V40Q80 70 0 125Z" fill="#fff" opacity=".12" /></Sheen>
          <ThumbList>
            {slides.map(([n, kind]) => (
              <ThumbRow key={n}>
                <ThumbButton $active={n === 29}>
                  <ThumbNumber>{n}</ThumbNumber>
                  <ThumbFrame><ThumbArt kind={kind} /></ThumbFrame>
                </ThumbButton>
              </ThumbRow>
            ))}
          </ThumbList>
          <ScrollTrack>
            <ScrollArrow aria-label="Scroll up"><Arrow dir="up" /></ScrollArrow>
            <ScrollGap $grow={192} />
            <ScrollThumb $grow={39}><Grip /></ScrollThumb>
            <ScrollGap $grow={538} />
            <ScrollArrow aria-label="Scroll down"><Arrow dir="down" /></ScrollArrow>
          </ScrollTrack>
        </PaneBody>
      </SlidePane>
      <Divider />
      <Editor>
        <Stage>
          <StageColumn>
            <Canvas>
              <Sheen width="500" height="60" aria-hidden="true"><path d="M0 0H236Q120 18 0 53Z" fill="#fff" opacity=".25" /></Sheen>
              <PlacedObject $left={84} $top={17} $width={239} $height={441}><LargeSiteDialog /></PlacedObject>
              <PlacedObject $left={353} $top={46} $fill><MonitorApp /></PlacedObject>
              <PlacedObject $left={589} $top={197} $width={243} $height={250}><SmallSiteDialog /></PlacedObject>
              <PlacedObject $left={18} $top={283}>
                <SlideNote>
                  <p>{"New pop-up provided. Also on SVN.\nCrop the relevant part and do the\nneedful."}</p>
                  <p>{"SVN path:\nhttp://192.168.2.4/content2016/Philips\n_Healthcare/Xper-\n2.1_Technical_updates_35_Modules/0\n3_Project_Development/Construction/\nClient_Inputs_Requirements/Base_Con\ntent/Example of changes/Site selection\n-1.png"}</p>
                </SlideNote>
              </PlacedObject>
            </Canvas>
            <ScrollTrack $row>
              <ScrollArrow aria-label="Scroll left"><Arrow dir="left" /></ScrollArrow>
              <ScrollGap $grow={7} />
              <ScrollThumb $row $grow={823}><Grip row /></ScrollThumb>
              <ScrollGap $grow={205} />
              <ScrollArrow aria-label="Scroll right"><Arrow dir="right" /></ScrollArrow>
            </ScrollTrack>
          </StageColumn>
          <ScrollTrack>
            <ScrollGap $grow={180} />
            <ScrollThumb $grow={8} />
            <ScrollGap $grow={417} />
            <ScrollArrow aria-label="Scroll down"><Arrow dir="down" /></ScrollArrow>
            <PageJump>
              {["Previous slide", "Next slide"].map((t, i) => (
                <JumpButton key={t} aria-label={t}>
                  <svg width="8" height="10" aria-hidden="true"><path d={i ? "M0 1H8L4 5ZM0 5H8L4 9Z" : "M0 5H8L4 1ZM0 9H8L4 5Z"} fill="#000" /></svg>
                </JumpButton>
              ))}
            </PageJump>
          </ScrollTrack>
        </Stage>
        <Splitter />
        <NotesRow>
          <NotesText><b>AX15:</b> The <b>Site</b> dialog box opens. Now, select the desired invasive pressure channel label.</NotesText>
          <ScrollTrack>
            <ScrollArrow aria-label="Scroll notes up"><Arrow dir="up" fill="#6482ae" /></ScrollArrow>
            <ScrollGap $grow={1} />
            <ScrollArrow aria-label="Scroll notes down"><Arrow dir="down" fill="#6482ae" /></ScrollArrow>
          </ScrollTrack>
        </NotesRow>
      </Editor>
      <ReviewNote>Screenshot not updated as per the instruction.</ReviewNote>
      <ReviewArrows aria-hidden="true">
        <path d="M646 701 493 344M776 701 811 534" stroke="#f00" strokeWidth="4" />
        <path d="M485 326 487 351 502 343ZM815 515 802 537 818 540Z" fill="#f00" />
      </ReviewArrows>
    </Shell>
  );
}
